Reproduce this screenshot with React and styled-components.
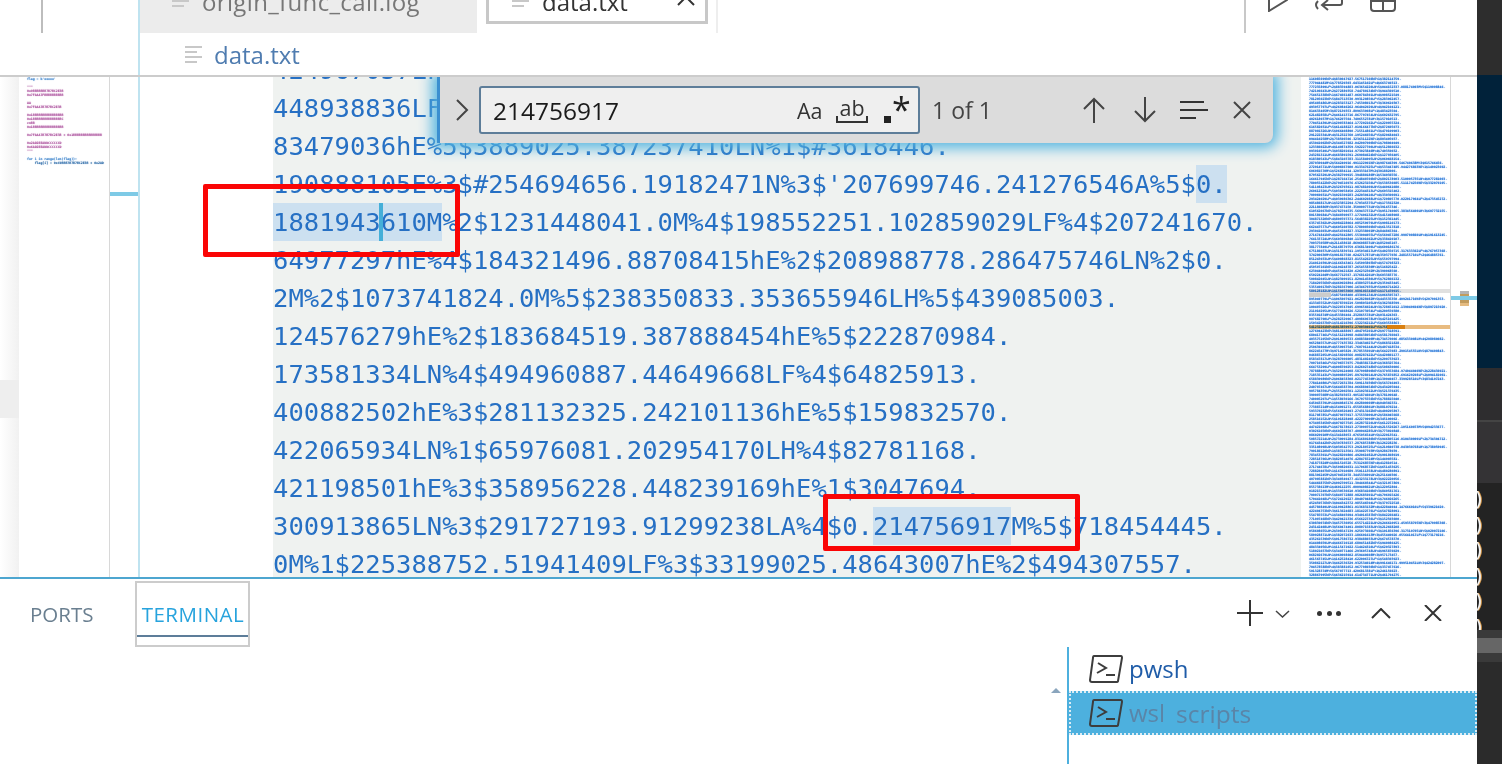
import styled, { createGlobalStyle } from 'styled-components'

const GlobalStyle = createGlobalStyle`
  html, body { margin: 0; padding: 0; background: #fff; }
  * { box-sizing: border-box; }
`

const UI_FONT = `"Open Sans", "Noto Sans", sans-serif`
const MONO_FONT = `"DejaVu Sans Mono", "Liberation Mono", monospace`

const LINES = [
  ['424967057LF%4$'],
  ['448938836LF%4$207241670.123456789hE%2$'],
  ['83479036hE%5$3889025.387237410LN%1$#3618446.'],
  [`190888105E%3$#254694656.19182471N%3$'207699746.241276546A%5$`, { mark: '0.' }],
  [{ mark: '1881943', caret: true }, { mark: '610M' }, '%2$1231448041.0M%4$198552251.102859029LF%4$207241670.'],
  ['64977297hE%4$184321496.88708415hE%2$208988778.286475746LN%2$0.'],
  ['2M%2$1073741824.0M%5$238350833.353655946LH%5$439085003.'],
  ['124576279hE%2$183684519.387888454hE%5$222870984.'],
  ['173581334LN%4$494960887.44649668LF%4$64825913.'],
  ['400882502hE%3$281132325.242101136hE%5$159832570.'],
  ['422065934LN%1$65976081.202954170LH%4$82781168.'],
  ['421198501hE%3$358956228.448239169hE%1$3047694.'],
  ['300913865LN%3$291727193.91299238LA%4$0.', { mark: '214756917' }, 'M%5$718454445.'],
  ['0M%1$225388752.51941409LF%3$33199025.48643007hE%2$494307557.'],
]

const LEFT_CODE = [
  { text: `flag = b'xxxxx'`, color: '#4f8fd0' },
  { gap: 1 },
  { text: '"""', color: '#b565a8' },
  { text: '0x9BBBBBBB7B7BC2E3B', color: '#b565a8' },
  { text: '0x7FAAA7FBBBBBBBBBB', color: '#b565a8' },
  { gap: 1 },
  { text: 'AA', color: '#b565a8' },
  { text: '0x7FAAA7B7B7BC2E3B', color: '#b565a8' },
  { gap: 1 },
  { text: '0x1BBBBBBBBBBBBBBBB', color: '#b565a8' },
  { text: '0x1BBBBBBBBBBBBBBBC', color: '#b565a8' },
  { text: 'cnBB', color: '#b565a8' },
  { text: '0x1BBBBBBBBBBBBBBBB', color: '#b565a8' },
  { gap: 1 },
  { text: '0x7FAAA7B7B7BC2E3B + 0x1BBBBBBBBBBBBBBB', color: '#b565a8' },
  { gap: 1 },
  { text: '0x2AD2EEADDCCCCCCD', color: '#b565a8' },
  { text: '0x6AD2EEADDCCCCCCD', color: '#b565a8' },
  { text: '"""', color: '#b565a8' },
  { gap: 1 },
  { text: 'for i in range(len(flag)):', color: '#4f8fd0' },
  { text: '    flag[i] = 0xC9BBB7B7B7BC2E3B + 0x2AD', color: '#3f78b0' },
]

// filler for the minimap, same shape as the file but seeded so it stays stable
const makeMinimap = () => {
  let seed = 7919
  const next = (n) => {
    seed = (seed * 1103515245 + 12345) % 2147483648
    return Math.floor((seed / 2147483648) * n)
  }
  const digits = (n) => Array.from({ length: n }, () => next(10)).join('')
  const tags = ['LF', 'hE', 'LN', 'LH', 'M']
  return Array.from({ length: 126 }, () => {
    const parts = next(6) === 0 ? 3 : 2
    let line = ''
    for (let i = 0; i < parts; i++) {
      line += `${digits(9)}${tags[next(5)]}%${next(5) + 1}$${digits(9)}.`
    }
    return line
  })
}

const MINIMAP = makeMinimap()

const STRIP = [
  { h: 75, c: '#2d2d2d' },
  { h: 293, c: '#01223a' },
  { h: 52, c: '#2e2d2f' },
  { h: 2, c: '#444' },
  { h: 61, c: '#343335' },
  { h: 147, c: '#232323', parens: true },
  { h: 8, c: '#3a3a3a' },
  { h: 15, c: '#666' },
  { h: 9, c: '#3a3a3a' },
  { h: 102, c: '#2b2b2b' },
]

const FileIcon = ({ clipped }) => (
  <FileIconBox $clipped={clipped}>
    <FileBar $w={17} />
    <FileBar $w={12} />
    <FileBar $w={17} />
    <FileBar $w={12} />
  </FileIconBox>
)

const Svg = ({ w, h, children, color = '#444', sw = 2 }) => (
  <svg width={w} height={h} viewBox={`0 0 ${w} ${h}`} fill="none" stroke={color} strokeWidth={sw} style={{ flex: 'none', display: 'block' }}>
    {children}
  </svg>
)

const TerminalIcon = () => (
  <Svg w={34} h={30} color="#3d3d3d" sw={2}>
    <path d="M5 2 L32 2 Q33 2 33 4 L29 27 Q29 28 27 28 L3 28 Q1 28 1 26 L4 4 Q4 2 5 2Z" />
    <path d="M9 9 L17 14 L8 19" />
    <path d="M17 21 L26 21" />
  </Svg>
)

export default function App() {
  return (
    <Root>
      <GlobalStyle />
      <Main>
        <Top>
          <TopLeft><TopLeftRule /></TopLeft>
          <TopGroup>
            <TabRow>
              <Tab $active={false}>
                <FileIcon clipped />
                <TabLabel>origin_func_call.log</TabLabel>
              </Tab>
              <Tab $active>
                <FileIcon clipped />
                <TabLabel $dark>data.txt</TabLabel>
                <TabClose>
                  <Svg w={18} h={18} color="#333"><path d="M1 1 L17 17 M17 1 L1 17" /></Svg>
                </TabClose>
              </Tab>
              <TabEdge />
              <TabActions>
                <Svg w={20} h={12} color="#555"><path d="M1 -14 L19 0 L1 11Z" /></Svg>
                <Svg w={28} h={12} color="#555"><path d="M27 -8 V3 Q27 5 25 5 H8 M13 0 L7 5 L13 10 M3 1 Q1 3 1 5 Q1 7 3 9" /></Svg>
                <Svg w={26} h={12} color="#555"><path d="M1 -8 V8 Q1 11 4 11 H22 Q25 11 25 8 V-8 M13 -8 V11 M1 1 H25" /></Svg>
              </TabActions>
            </TabRow>
            <Breadcrumb>
              <FileIcon />
              <CrumbLabel>data.txt</CrumbLabel>
            </Breadcrumb>
          </TopGroup>
        </Top>

        <Body>
          <LeftPane>
            <LeftShade><ShadeBlock /></LeftShade>
            <LeftCode>
              {LEFT_CODE.map((line, i) => (
                <TinyLine key={i} $color={line.color}>{line.text || ' '}</TinyLine>
              ))}
            </LeftCode>
            <LeftGutter><LeftThumb /></LeftGutter>
          </LeftPane>

          <EditorPane>
            <LineGutter />
            <TextArea>
              <TextLines>
                {LINES.map((parts, i) => (
                  <TextLine key={i}>
                    {parts.map((part, j) =>
                      typeof part === 'string' ? (
                        <span key={j}>{part}</span>
                      ) : (
                        <Mark key={j}>{part.mark}{part.caret && <Caret />}</Mark>
                      )
                    )}
                  </TextLine>
                ))}
              </TextLines>
            </TextArea>
            <Minimap>
              <MiniText>
                {MINIMAP.map((line, i) => <MiniLine key={i}>{line}</MiniLine>)}
              </MiniText>
              <MiniBand $top={212} $color="#e0e0e0" />
              <MiniChip />
              <MiniBand $top={248} $color="#e8bb80" />
              <MiniHit />
            </Minimap>
            <Ruler>
              <RulerMark $top={214} $h={3} $color="#b4b4b4" />
              <RulerMark $top={217} $h={9} $color="#c29c5e" />
              <RulerMark $top={226} $h={3} $color="#e5bb80" />
              <RulerLine />
            </Ruler>
          </EditorPane>

          <FindWidget>
            <Svg w={14} h={22} color="#444"><path d="M2 1 L12 11 L2 21" /></Svg>
            <FindInput>
              <FindValue>214756917</FindValue>
              <OptionAa>Aa</OptionAa>
              <OptionAb>ab</OptionAb>
              <OptionRegex>
                <RegexDot />
                <RegexStar>*</RegexStar>
              </OptionRegex>
            </FindInput>
            <FindCount>1 of 1</FindCount>
            <FindActions>
              <Svg w={22} h={26}><path d="M11 26 V2 M1 12 L11 2 L21 12" /></Svg>
              <DownSlot>
                <Svg w={22} h={26}><path d="M11 0 V24 M1 14 L11 24 L21 14" /></Svg>
              </DownSlot>
              <Svg w={28} h={20} color="#333"><path d="M0 2 H24 M0 10 H28 M0 18 H16" /></Svg>
              <Svg w={18} h={18}><path d="M1 1 L17 17 M17 1 L1 17" /></Svg>
            </FindActions>
          </FindWidget>

          <RedBox $left={203} $top={107} $h={73} />
          <RedBox $left={823} $top={417} $h={57} />
        </Body>

        <Panel>
          <PanelTabs>
            <PortsTab>PORTS</PortsTab>
            <TerminalTab>
              <TerminalLabel>TERMINAL</TerminalLabel>
            </TerminalTab>
          </PanelTabs>
          <PanelActions>
            <Svg w={26} h={26} color="#333"><path d="M13 0 V26 M0 13 H26" /></Svg>
            <ChevronSlot>
              <Svg w={15} h={8} color="#444" sw={1.5}><path d="M1 1 L7.5 7 L14 1" /></Svg>
            </ChevronSlot>
            <Dots><Dot /><Dot /><Dot /></Dots>
            <Svg w={20} h={11} color="#333"><path d="M1 10 L10 1 L19 10" /></Svg>
            <CloseSlot>
              <Svg w={18} h={16} color="#333"><path d="M1 0 L17 16 M17 0 L1 16" /></Svg>
            </CloseSlot>
          </PanelActions>
          <TerminalList>
            <SashArrow />
            <TerminalRow>
              <TerminalIcon />
              <TerminalName>pwsh</TerminalName>
            </TerminalRow>
            <TerminalRow $selected>
              <TerminalIcon />
              <TerminalName $selected>wsl</TerminalName>
              <TerminalPath>scripts</TerminalPath>
            </TerminalRow>
          </TerminalList>
        </Panel>
      </Main>

      <Strip>
        {STRIP.map((seg, i) => (
          <StripSegment key={i} $h={seg.h} $color={seg.c}>
            {seg.parens && [0, 1, 2, 3, 4, 5].map((n) => <Paren key={n}>)</Paren>)}
          </StripSegment>
        ))}
      </Strip>
    </Root>
  )
}

const Root = styled.div`
  display: flex;
  width: 1502px;
  height: 764px;
  overflow: hidden;
  background: #fff;
  font-family: ${UI_FONT};
`

const Main = styled.div`
  display: flex;
  flex-direction: column;
  width: 1477px;
  flex: none;
`

const Top = styled.div`
  display: flex;
  height: 77px;
  flex: none;
  border-bottom: 2px solid #cccccc;
`

const TopLeft = styled.div`
  width: 138px;
  flex: none;
`

const TopLeftRule = styled.div`
  width: 43px;
  height: 33px;
  border-right: 2px solid #bdbdbd;
`

const TopGroup = styled.div`
  flex: 1;
  min-width: 0;
  border-left: 2px solid #bfe3f0;
`

const TabRow = styled.div`
  display: flex;
  height: 33px;
  overflow: hidden;
`

const Tab = styled.div`
  display: flex;
  align-items: flex-start;
  flex: none;
  height: ${(p) => (p.$active ? '24px' : '33px')};
  width: ${(p) => (p.$active ? '222px' : '337px')};
  margin-left: ${(p) => (p.$active ? '9px' : '0')};
  padding-left: ${(p) => (p.$active ? '23px' : '32px')};
  background: ${(p) => (p.$active ? '#fff' : '#ececec')};
  border: ${(p) => (p.$active ? '3px solid #c8c8c8' : 'none')};
  border-top: none;
`

const FileIconBox = styled.div`
  display: flex;
  flex-direction: column;
  gap: 3px;
  width: 17px;
  flex: none;
  margin-top: ${(p) => (p.$clipped ? '-10px' : '0')};
`

const FileBar = styled.div`
  height: 2px;
  width: ${(p) => p.$w}px;
  background: #c8c8c8;
`

const TabLabel = styled.div`
  margin: -16px 0 0 13px;
  font-size: 24px;
  line-height: 36px;
  white-space: nowrap;
  letter-spacing: ${(p) => (p.$dark ? '0' : '0.35px')};
  color: ${(p) => (p.$dark ? '#333' : '#777')};
`

const TabClose = styled.div`
  margin: -12px 0 0 auto;
  padding-right: 10px;
`

const TabEdge = styled.div`
  width: 2px;
  height: 33px;
  margin-left: 8px;
  background: #eeeeee;
  flex: none;
`

const TabActions = styled.div`
  display: flex;
  align-items: flex-start;
  gap: 27px;
  margin-left: 526px;
  padding-left: 22px;
  border-left: 2px solid #c8c8c8;
  height: 33px;
`

const Breadcrumb = styled.div`
  display: flex;
  align-items: center;
  height: 42px;
  padding-left: 45px;
`

const CrumbLabel = styled.div`
  margin-left: 12px;
  font-size: 24px;
  color: #4f7cb0;
`

const Body = styled.div`
  position: relative;
  display: flex;
  height: 500px;
  flex: none;
  overflow: hidden;
`

const LeftPane = styled.div`
  display: flex;
  width: 138px;
  flex: none;
`

const LeftShade = styled.div`
  width: 19px;
  flex: none;
  padding-top: 303px;
  background: linear-gradient(to right, #ffffff, #f1f1f1);
`

const ShadeBlock = styled.div`
  height: 38px;
  background: #eeeeee;
`

const LeftCode = styled.div`
  width: 91px;
  flex: none;
  padding-left: 8px;
  overflow: hidden;
  border-right: 1px solid #d8d8d8;
  filter: blur(0.3px);
`

const TinyLine = styled.div`
  font-family: ${MONO_FONT};
  font-size: 3.2px;
  font-weight: 700;
  line-height: 4px;
  height: 4px;
  white-space: pre;
  color: ${(p) => p.$color || 'transparent'};
  text-shadow: 0 0 1px ${(p) => p.$color || 'transparent'};
`

const LeftGutter = styled.div`
  flex: 1;
  padding-top: 115px;
`

const LeftThumb = styled.div`
  height: 4px;
  background: #7ecae6;
`

const EditorPane = styled.div`
  display: flex;
  flex: 1;
  min-width: 0;
  border-left: 2px solid #bfe3f0;
`

const LineGutter = styled.div`
  width: 133px;
  flex: none;
`

const TextArea = styled.div`
  width: 1028px;
  flex: none;
  background: #eff2f0;
  overflow: hidden;
`

const TextLines = styled.div`
  margin-top: -26px;
`

const TextLine = styled.div`
  height: 38px;
  font-family: ${MONO_FONT};
  font-size: 25.5px;
  letter-spacing: 0.03px;
  line-height: 38px;
  white-space: pre;
  color: #2670c4;
`

const Mark = styled.span`
  position: relative;
  display: inline-block;
  height: 38px;
  background: #cce0f0;
`

const Caret = styled.span`
  position: absolute;
  z-index: 1;
  top: 0;
  left: 106px;
  width: 4px;
  height: 38px;
  background: #45afd8;
`

const Minimap = styled.div`
  position: relative;
  width: 150px;
  flex: none;
  padding-left: 8px;
  overflow: hidden;
  border-right: 1px solid #d8d8d8;
`

const MiniText = styled.div`
  filter: blur(0.3px);
`

const MiniLine = styled.div`
  font-family: ${MONO_FONT};
  font-size: 3.2px;
  font-weight: 700;
  line-height: 4px;
  height: 4px;
  white-space: nowrap;
  color: #2a78d8;
  text-shadow: 0 0 1px #2a78d8;
`

const MiniBand = styled.div`
  position: absolute;
  left: 8px;
  right: 0;
  top: ${(p) => p.$top}px;
  height: 4px;
  background: ${(p) => p.$color};
  mix-blend-mode: multiply;
`

const MiniChip = styled.div`
  position: absolute;
  left: 8px;
  top: 216px;
  width: 22px;
  height: 4px;
  background: #cccccc;
`

const MiniHit = styled.div`
  position: absolute;
  left: 86px;
  top: 248px;
  width: 18px;
  height: 4px;
  background: #d97f10;
`

const Ruler = styled.div`
  position: relative;
  flex: 1;
`

const RulerMark = styled.div`
  position: absolute;
  left: 9px;
  width: 9px;
  top: ${(p) => p.$top}px;
  height: ${(p) => p.$h}px;
  background: ${(p) => p.$color};
`

const RulerLine = styled.div`
  position: absolute;
  left: 0;
  right: 0;
  top: 219px;
  height: 4px;
  background: #7ecae6;
`

const FindWidget = styled.div`
  position: absolute;
  left: 437px;
  top: 0;
  display: flex;
  align-items: center;
  width: 836px;
  height: 66px;
  padding-left: 15px;
  background: #dcdcdc;
  border-left: 3px solid #3b8fd0;
  border-bottom-right-radius: 8px;
  box-shadow: 0 0 14px 5px #56b6e0;
`

const FindInput = styled.div`
  display: flex;
  align-items: center;
  width: 441px;
  height: 48px;
  margin: 0 0 0 10px;
  padding-left: 12px;
  background: #efefef;
  border: 2px solid #5d7d99;
  border-radius: 3px;
`

const FindValue = styled.div`
  width: 304px;
  font-size: 24.5px;
  color: #1a1a1a;
`

const OptionAa = styled.div`
  width: 39px;
  font-size: 21.5px;
  color: #333;
`

const OptionAb = styled.div`
  position: relative;
  width: 32px;
  height: 26px;
  font-size: 21.5px;
  line-height: 22px;
  text-align: center;
  color: #333;
  border-bottom: 2px solid #333;

  &::before,
  &::after {
    content: '';
    position: absolute;
    bottom: 0;
    width: 2px;
    height: 5px;
    background: #333;
  }
  &::before { left: 0; }
  &::after { right: 0; }
`

const OptionRegex = styled.div`
  position: relative;
  width: 26px;
  height: 30px;
  margin-left: 16px;
`

const RegexDot = styled.div`
  position: absolute;
  left: 0;
  bottom: 2px;
  width: 7px;
  height: 7px;
  background: #222;
`

const RegexStar = styled.div`
  position: absolute;
  left: 8px;
  top: -6px;
  font-size: 34px;
  line-height: 40px;
  color: #222;
`

const FindCount = styled.div`
  width: 94px;
  margin-left: 12px;
  font-size: 23px;
  color: #444;
`

const FindActions = styled.div`
  display: flex;
  align-items: center;
  gap: 25px;
  margin-left: 57px;
`

const DownSlot = styled.div`
  margin-left: 4px;
  margin-right: -1px;
`

const RedBox = styled.div`
  position: absolute;
  left: ${(p) => p.$left}px;
  top: ${(p) => p.$top}px;
  width: 257px;
  height: ${(p) => p.$h}px;
  border: 5px solid #fa0505;
  border-radius: 2px;
`

const Panel = styled.div`
  position: relative;
  flex: 1;
  display: grid;
  grid-template-columns: 1067px 1fr;
  grid-template-rows: 68px 1fr;
  border-top: 2px solid #4da6d0;
`

const PanelTabs = styled.div`
  display: flex;
  align-items: flex-start;
  padding: 2px 0 0 30px;
`

const PortsTab = styled.div`
  margin-top: 19px;
  font-size: 20.5px;
  line-height: 28px;
  color: #6a7f90;
`

const TerminalTab = styled.div`
  width: 115px;
  height: 66px;
  margin-left: 42px;
  padding-top: 17px;
  border: 2px solid #cccccc;
  text-align: center;
`

const TerminalLabel = styled.div`
  height: 37px;
  font-size: 20.5px;
  letter-spacing: 0.5px;
  line-height: 28px;
  color: #27a3dd;
  border-bottom: 2px solid #5d7d99;
`

const PanelActions = styled.div`
  display: flex;
  align-items: center;
  justify-content: flex-end;
  padding: 0 35px 0 0;
  height: 68px;
`

const ChevronSlot = styled.div`
  margin: 2px 0 0 12px;
`

const Dots = styled.div`
  display: flex;
  gap: 4.5px;
  margin: 0 30px 0 27px;
`

const Dot = styled.div`
  width: 5px;
  height: 5px;
  border-radius: 50%;
  background: #333;
`

const CloseSlot = styled.div`
  margin-left: 33px;
`

const TerminalList = styled.div`
  position: relative;
  grid-column: 2;
  border-left: 2px solid #4db0de;
`

const SashArrow = styled.div`
  position: absolute;
  left: -18px;
  top: 41px;
  border-left: 5px solid transparent;
  border-right: 5px solid transparent;
  border-bottom: 5px solid #8aa5bd;
`

const TerminalRow = styled.div`
  display: flex;
  align-items: center;
  height: 44px;
  padding-left: 20px;
  background: ${(p) => (p.$selected ? '#4db0de' : 'transparent')};
  outline: ${(p) => (p.$selected ? '2px dotted #dcecf4' : 'none')};
  outline-offset: -2px;
`

const TerminalName = styled.div`
  margin-left: 6px;
  font-size: 24px;
  line-height: 34px;
  color: ${(p) => (p.$selected ? '#5a85a8' : '#1f5ca8')};
`

const TerminalPath = styled.div`
  margin-left: 11px;
  font-size: 24.5px;
  color: #5a85a8;
`

const Strip = styled.div`
  display: flex;
  flex-direction: column;
  flex: 1;
  overflow: hidden;
`

const StripSegment = styled.div`
  height: ${(p) => p.$h}px;
  flex: none;
  background: ${(p) => p.$color};
  overflow: hidden;
  padding-top: ${(p) => (p.$h === 147 ? '4px' : '0')};
`

const Paren = styled.div`
  height: 25.5px;
  margin-left: -4px;
  font-family: ${MONO_FONT};
  font-size: 20px;
  line-height: 25px;
  color: #f2f2f2;
  text-shadow: 1px 0 0 #d99a4a;
`
